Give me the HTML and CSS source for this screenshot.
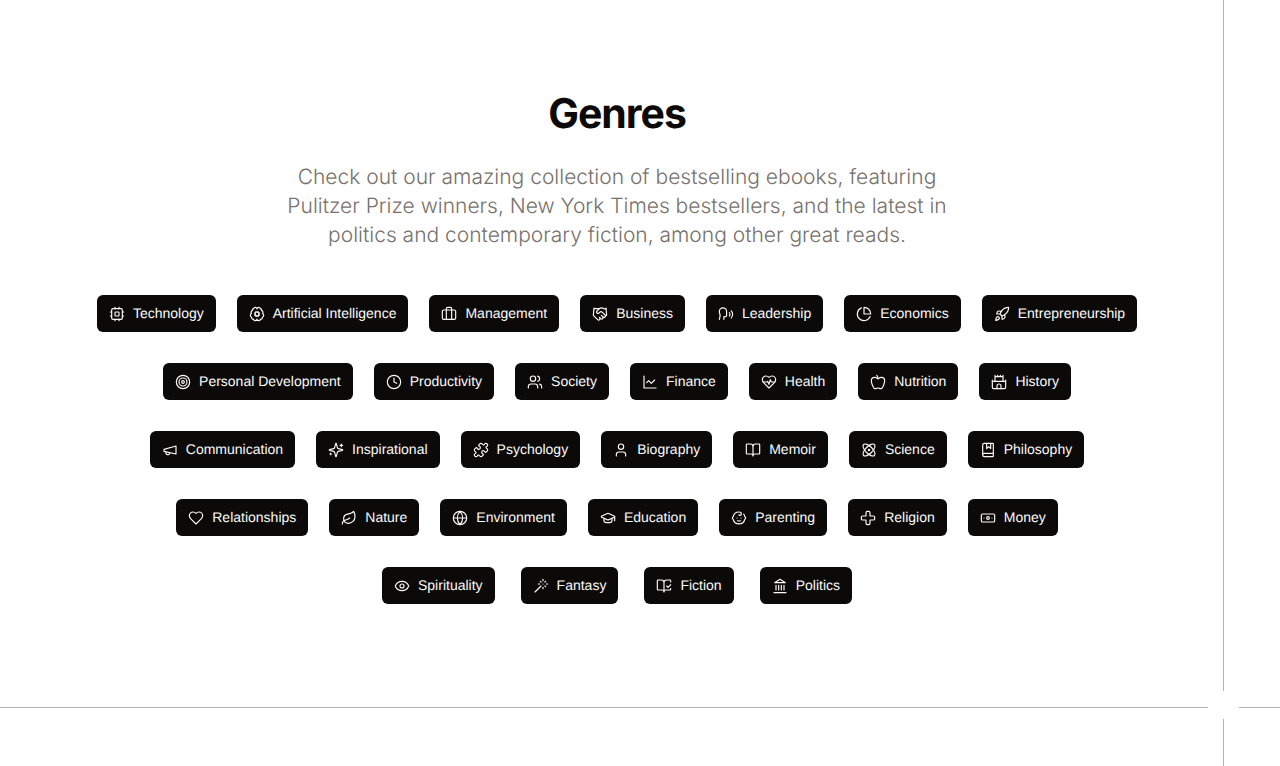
FILE: index.html
```html
<!DOCTYPE html>
<html lang="en">
<head>
<meta charset="utf-8">
<meta name="viewport" content="width=device-width, initial-scale=1">
<title>Genres</title>
<link rel="stylesheet" href="styles.css">
</head>
<body>
<div class="page">
<main class="genres">
<header class="intro">
<h1 class="title">Genres</h1>
<p class="lead">Check out our amazing collection of bestselling ebooks, featuring Pulitzer Prize winners, New York Times bestsellers, and the latest in politics and contemporary fiction, among other great reads.</p>
</header>
<div class="rows">
<div class="row">
<button class="genre" type="button"><svg class="icon" viewBox="0 0 24 24" aria-hidden="true"><rect x="4" y="4" width="16" height="16" rx="2"/><rect x="9" y="9" width="6" height="6" rx="1"/><path d="M15 2v2M15 20v2M2 15h2M2 9h2M20 15h2M20 9h2M9 2v2M9 20v2"/></svg>Technology</button>
<button class="genre" type="button"><svg class="icon" viewBox="0 0 24 24" aria-hidden="true"><circle cx="12" cy="12" r="3"/><path d="M12 4.5a2.5 2.5 0 0 0-4.96-.46 2.5 2.5 0 0 0-1.98 3 2.5 2.5 0 0 0-1.32 4.24 3 3 0 0 0 .34 5.58 2.5 2.5 0 0 0 2.96 3.08A2.5 2.5 0 0 0 12 19.5a2.5 2.5 0 0 0 4.96.44 2.5 2.5 0 0 0 2.96-3.08 3 3 0 0 0 .34-5.58 2.5 2.5 0 0 0-1.32-4.24 2.5 2.5 0 0 0-1.98-3A2.5 2.5 0 0 0 12 4.5M15.7 10.4l-.9.4M9.2 13.2l-.9.4M13.6 15.7l-.4-.9M10.8 9.2l-.4-.9M15.7 13.5l-.9-.4M9.2 10.9l-.9-.4M10.5 15.7l.4-.9M13.1 9.2l.4-.9"/></svg>Artificial Intelligence</button>
<button class="genre" type="button"><svg class="icon" viewBox="0 0 24 24" aria-hidden="true"><path d="M16 20V4a2 2 0 0 0-2-2h-4a2 2 0 0 0-2 2v16"/><rect x="2" y="6" width="20" height="14" rx="2"/></svg>Management</button>
<button class="genre" type="button"><svg class="icon" viewBox="0 0 24 24" aria-hidden="true"><path d="m11 17 2 2a1 1 0 1 0 3-3"/><path d="m14 14 2.5 2.5a1 1 0 1 0 3-3l-3.88-3.88a3 3 0 0 0-4.24 0l-.88.88a1 1 0 1 1-3-3l2.81-2.81a5.79 5.79 0 0 1 7.06-.87l.47.28a2 2 0 0 0 1.42.25L21 4"/><path d="m21 3 1 11h-2M3 3 2 14l6.5 6.5a1 1 0 1 0 3-3M3 4h8"/></svg>Business</button>
<button class="genre" type="button"><svg class="icon" viewBox="0 0 24 24" aria-hidden="true"><path d="M8.8 20v-4.1l1.9.2a2.3 2.3 0 0 0 2.164-2.1V8.3A5.37 5.37 0 0 0 2 8.25c0 2.8.656 3.054 1 4.55a5.77 5.77 0 0 1 .029 2.758L2 20"/><path d="M19.8 17.8a7.5 7.5 0 0 0 .003-10.603M17 15a3.5 3.5 0 0 0-.025-4.975"/></svg>Leadership</button>
<button class="genre" type="button"><svg class="icon" viewBox="0 0 24 24" aria-hidden="true"><path d="M21.21 15.89A10 10 0 1 1 8 2.83M22 12A10 10 0 0 0 12 2v10z"/></svg>Economics</button>
<button class="genre" type="button"><svg class="icon" viewBox="0 0 24 24" aria-hidden="true"><path d="M4.5 16.5c-1.5 1.26-2 5-2 5s3.74-.5 5-2c.71-.84.7-2.13-.09-2.91a2.18 2.18 0 0 0-2.91-.09z"/><path d="m12 15-3-3a22 22 0 0 1 2-3.95A12.88 12.88 0 0 1 22 2c0 2.72-.78 7.5-6 11a22.35 22.35 0 0 1-4 2z"/><path d="M9 12H4s.55-3.03 2-4c1.62-1.08 5 0 5 0M12 15v5s3.03-.55 4-2c1.08-1.62 0-5 0-5"/></svg>Entrepreneurship</button>
</div>
<div class="row">
<button class="genre" type="button"><svg class="icon" viewBox="0 0 24 24" aria-hidden="true"><circle cx="12" cy="12" r="10"/><circle cx="12" cy="12" r="6"/><circle cx="12" cy="12" r="2"/></svg>Personal Development</button>
<button class="genre" type="button"><svg class="icon" viewBox="0 0 24 24" aria-hidden="true"><circle cx="12" cy="12" r="10"/><path d="M12 6v6l4 2"/></svg>Productivity</button>
<button class="genre" type="button"><svg class="icon" viewBox="0 0 24 24" aria-hidden="true"><path d="M16 21v-2a4 4 0 0 0-4-4H6a4 4 0 0 0-4 4v2"/><circle cx="9" cy="7" r="4"/><path d="M22 21v-2a4 4 0 0 0-3-3.87M16 3.13a4 4 0 0 1 0 7.75"/></svg>Society</button>
<button class="genre" type="button"><svg class="icon" viewBox="0 0 24 24" aria-hidden="true"><path d="M3 3v18h18M19 9l-5 5-4-4-3 3"/></svg>Finance</button>
<button class="genre" type="button"><svg class="icon" viewBox="0 0 24 24" aria-hidden="true"><path d="M19 14c1.49-1.46 3-3.21 3-5.5A5.5 5.5 0 0 0 16.5 3c-1.76 0-3 .5-4.5 2-1.5-1.5-2.74-2-4.5-2A5.5 5.5 0 0 0 2 8.5c0 2.3 1.5 4.05 3 5.5l7 7Z"/><path d="M3.22 12H9.5l.5-1 2 4.5 2-7 1.5 3.5h5.27"/></svg>Health</button>
<button class="genre" type="button"><svg class="icon" viewBox="0 0 24 24" aria-hidden="true"><path d="M12 20.94c1.5 0 2.75 1.06 4 1.06 3 0 6-8 6-12.22A4.91 4.91 0 0 0 17 5c-2.22 0-4 1.44-5 2-1-.56-2.78-2-5-2a4.9 4.9 0 0 0-5 4.78C2 14 5 22 8 22c1.25 0 2.5-1.06 4-1.06Z"/><path d="M10 2c1 .5 2 2 2 5"/></svg>Nutrition</button>
<button class="genre" type="button"><svg class="icon" viewBox="0 0 24 24" aria-hidden="true"><path d="M22 20v-9H2v9a2 2 0 0 0 2 2h16a2 2 0 0 0 2-2Z"/><path d="M18 11V4H6v7M15 22v-4a3 3 0 0 0-6 0v4M22 11V9M2 11V9M6 4V2M18 4V2M10 4V2M14 4V2"/></svg>History</button>
</div>
<div class="row">
<button class="genre" type="button"><svg class="icon" viewBox="0 0 24 24" aria-hidden="true"><path d="m3 11 18-5v12L3 14v-3z"/><path d="M11.6 16.8a3 3 0 1 1-5.8-1.6"/></svg>Communication</button>
<button class="genre" type="button"><svg class="icon" viewBox="0 0 24 24" aria-hidden="true"><path d="M9.937 15.5A2 2 0 0 0 8.5 14.063l-6.135-1.582a.5.5 0 0 1 0-.962L8.5 9.936A2 2 0 0 0 9.937 8.5l1.582-6.135a.5.5 0 0 1 .963 0L14.063 8.5A2 2 0 0 0 15.5 9.937l6.135 1.581a.5.5 0 0 1 0 .964L15.5 14.063a2 2 0 0 0-1.437 1.437l-1.582 6.135a.5.5 0 0 1-.963 0z"/><path d="M20 3v4M22 5h-4M4 17v2M5 18H3"/></svg>Inspirational</button>
<button class="genre" type="button"><svg class="icon" viewBox="0 0 24 24" aria-hidden="true"><path d="M19.439 7.85c-.049.322.059.648.289.878l1.568 1.568c.47.47.706 1.087.706 1.704s-.235 1.233-.706 1.704l-1.611 1.611a.98.98 0 0 1-.837.276c-.47-.07-.802-.48-.968-.925a2.501 2.501 0 1 0-3.214 3.214c.446.166.855.497.925.968a.979.979 0 0 1-.276.837l-1.61 1.61a2.404 2.404 0 0 1-1.705.707 2.402 2.402 0 0 1-1.704-.706l-1.568-1.568a1.026 1.026 0 0 0-.877-.29c-.493.074-.84.504-1.02.968a2.5 2.5 0 1 1-3.237-3.237c.464-.18.894-.527.967-1.02a1.026 1.026 0 0 0-.289-.877l-1.568-1.568A2.402 2.402 0 0 1 1.998 12c0-.617.236-1.234.706-1.704L4.23 8.77c.24-.24.581-.353.917-.303.515.077.877.528 1.073 1.01a2.5 2.5 0 1 0 3.259-3.259c-.482-.196-.933-.558-1.01-1.073-.05-.336.062-.676.303-.917l1.525-1.525A2.402 2.402 0 0 1 12 1.998c.617 0 1.234.236 1.704.706l1.568 1.568c.23.23.556.338.877.29.493-.074.84-.504 1.02-.968a2.5 2.5 0 1 1 3.237 3.237c-.464.18-.894.527-.967 1.02Z"/></svg>Psychology</button>
<button class="genre" type="button"><svg class="icon" viewBox="0 0 24 24" aria-hidden="true"><path d="M19 21v-2a4 4 0 0 0-4-4H9a4 4 0 0 0-4 4v2"/><circle cx="12" cy="7" r="4"/></svg>Biography</button>
<button class="genre" type="button"><svg class="icon" viewBox="0 0 24 24" aria-hidden="true"><path d="M12 7v14M3 18a1 1 0 0 1-1-1V4a1 1 0 0 1 1-1h5a4 4 0 0 1 4 4 4 4 0 0 1 4-4h5a1 1 0 0 1 1 1v13a1 1 0 0 1-1 1h-6a3 3 0 0 0-3 3 3 3 0 0 0-3-3z"/></svg>Memoir</button>
<button class="genre" type="button"><svg class="icon" viewBox="0 0 24 24" aria-hidden="true"><circle cx="12" cy="12" r="1"/><path d="M20.2 20.2c2.04-2.03.02-7.36-4.5-11.9-4.54-4.52-9.87-6.54-11.9-4.5-2.04 2.03-.02 7.36 4.5 11.9 4.54 4.52 9.87 6.54 11.9 4.5Z"/><path d="M15.7 15.7c4.52-4.54 6.54-9.87 4.5-11.9-2.03-2.04-7.36-.02-11.9 4.5-4.52 4.54-6.54 9.87-4.5 11.9 2.03 2.04 7.36.02 11.9-4.5Z"/></svg>Science</button>
<button class="genre" type="button"><svg class="icon" viewBox="0 0 24 24" aria-hidden="true"><path d="M10 2v8l3-3 3 3V2M4 19.5v-15A2.5 2.5 0 0 1 6.5 2H19a1 1 0 0 1 1 1v18a1 1 0 0 1-1 1H6.5a1 1 0 0 1 0-5H20"/></svg>Philosophy</button>
</div>
<div class="row">
<button class="genre" type="button"><svg class="icon" viewBox="0 0 24 24" aria-hidden="true"><path d="M19 14c1.49-1.46 3-3.21 3-5.5A5.5 5.5 0 0 0 16.5 3c-1.76 0-3 .5-4.5 2-1.5-1.5-2.74-2-4.5-2A5.5 5.5 0 0 0 2 8.5c0 2.3 1.5 4.05 3 5.5l7 7Z"/></svg>Relationships</button>
<button class="genre" type="button"><svg class="icon" viewBox="0 0 24 24" aria-hidden="true"><path d="M11 20A7 7 0 0 1 9.8 6.1C15.5 5 17 4.48 19 2c1 2 2 4.18 2 8 0 5.5-4.78 10-10 10Z"/><path d="M2 21c0-3 1.85-5.36 5.08-6C9.5 14.52 12 13 13 12"/></svg>Nature</button>
<button class="genre" type="button"><svg class="icon" viewBox="0 0 24 24" aria-hidden="true"><circle cx="12" cy="12" r="10"/><path d="M12 2a14.5 14.5 0 0 0 0 20 14.5 14.5 0 0 0 0-20M2 12h20"/></svg>Environment</button>
<button class="genre" type="button"><svg class="icon" viewBox="0 0 24 24" aria-hidden="true"><path d="M21.42 10.922a1 1 0 0 0-.019-1.838L12.83 5.18a2 2 0 0 0-1.66 0L2.6 9.08a1 1 0 0 0 0 1.832l8.57 3.908a2 2 0 0 0 1.66 0z"/><path d="M22 10v6M6 12.5V16a6 3 0 0 0 12 0v-3.5"/></svg>Education</button>
<button class="genre" type="button"><svg class="icon" viewBox="0 0 24 24" aria-hidden="true"><path d="M9 12h.01M15 12h.01M10 16c.5.3 1.2.5 2 .5s1.5-.2 2-.5"/><path d="M19 6.3a9 9 0 0 1 1.8 3.9 2 2 0 0 1 0 3.6 9 9 0 0 1-17.6 0 2 2 0 0 1 0-3.6A9 9 0 0 1 12 3c2 0 3.5 1.1 3.5 2.5s-.9 2.5-2 2.5c-.8 0-1.5-.4-1.5-1"/></svg>Parenting</button>
<button class="genre" type="button"><svg class="icon" viewBox="0 0 24 24" aria-hidden="true"><path d="M11 2a2 2 0 0 0-2 2v5H4a2 2 0 0 0-2 2v2c0 1.1.9 2 2 2h5v5c0 1.1.9 2 2 2h2a2 2 0 0 0 2-2v-5h5a2 2 0 0 0 2-2v-2a2 2 0 0 0-2-2h-5V4a2 2 0 0 0-2-2h-2z"/></svg>Religion</button>
<button class="genre" type="button"><svg class="icon" viewBox="0 0 24 24" aria-hidden="true"><rect x="2" y="6" width="20" height="12" rx="2"/><circle cx="12" cy="12" r="2"/><path d="M6 12h.01M18 12h.01"/></svg>Money</button>
</div>
<div class="row row-last">
<button class="genre" type="button"><svg class="icon" viewBox="0 0 24 24" aria-hidden="true"><path d="M2.062 12.348a1 1 0 0 1 0-.696 10.75 10.75 0 0 1 19.876 0 1 1 0 0 1 0 .696 10.75 10.75 0 0 1-19.876 0"/><circle cx="12" cy="12" r="3"/></svg>Spirituality</button>
<button class="genre" type="button"><svg class="icon" viewBox="0 0 24 24" aria-hidden="true"><path d="M15 4V2M15 16v-2M8 9h2M20 9h2M17.8 11.8 19 13M15 9h.01M17.8 6.2 19 5M3 21l9-9M12.2 6.2 11 5"/></svg>Fantasy</button>
<button class="genre" type="button"><svg class="icon" viewBox="0 0 24 24" aria-hidden="true"><path d="M12 21V7M16 12l2 2 4-4M22 6V4a1 1 0 0 0-1-1h-5a4 4 0 0 0-4 4 4 4 0 0 0-4-4H3a1 1 0 0 0-1 1v13a1 1 0 0 0 1 1h6a3 3 0 0 1 3 3 3 3 0 0 1 3-3h6a1 1 0 0 0 1-1v-1.3"/></svg>Fiction</button>
<button class="genre" type="button"><svg class="icon" viewBox="0 0 24 24" aria-hidden="true"><path d="M3 22h18M6 18v-7M10 18v-7M14 18v-7M18 18v-7M12 2l8 5H4z"/></svg>Politics</button>
</div>
</div>
</main>
<div class="corner"></div>
</div>
</body>
</html>
```

FILE: styles.css
```css
* {
  box-sizing: border-box;
}

body {
  margin: 0;
  background: #fff;
  color: #0c0a09;
  font-family: Inter, sans-serif;
  text-rendering: geometricPrecision;
}

.page {
  display: grid;
  grid-template-columns: 1fr 57px;
  grid-template-rows: 1fr 59px;
  min-height: 100vh;
  position: relative;
}

/* Rules that run the full page and cross near the bottom right */
.page::before,
.page::after {
  content: "";
  position: absolute;
  background: #b4b4b4;
}

.page::before {
  top: 0;
  bottom: 0;
  right: 56px;
  width: 1px;
}

.page::after {
  left: 0;
  right: 0;
  bottom: 58px;
  height: 1px;
}

/* Blank patch over the crossing point */
.corner {
  position: absolute;
  z-index: 1;
  right: 41px;
  bottom: 47px;
  width: 31px;
  height: 28px;
  background: #fff;
}

.genres {
  padding: 92px 0 102px 11px;
}

.intro {
  display: flex;
  flex-direction: column;
  align-items: center;
  gap: 29px;
  text-align: center;
}

.title {
  margin: 0;
  font-size: 41px;
  line-height: 42px;
  font-weight: 700;
  letter-spacing: -0.025em;
}

.lead {
  margin: 0;
  max-width: 684px;
  font-size: 21px;
  font-weight: 330;
  line-height: 29px;
  color: #78716c;
}

.rows {
  display: grid;
  gap: 31px;
  margin-top: 45px;
}

.row {
  display: flex;
  flex-wrap: wrap;
  justify-content: center;
  gap: 21px;
}

.row-last {
  column-gap: 26px;
}

.genre {
  display: flex;
  align-items: center;
  gap: 8px;
  padding: 9px 12px;
  border: 0;
  border-radius: 6px;
  background: #0c0a09;
  color: #fafaf9;
  font-family: "Liberation Sans", Arial, sans-serif;
  font-size: 14px;
  line-height: 19px;
  text-rendering: inherit;
  cursor: pointer;
}

.icon {
  width: 16px;
  height: 16px;
  fill: none;
  stroke: currentColor;
  stroke-width: 1.75;
  stroke-linecap: round;
  stroke-linejoin: round;
}
```
